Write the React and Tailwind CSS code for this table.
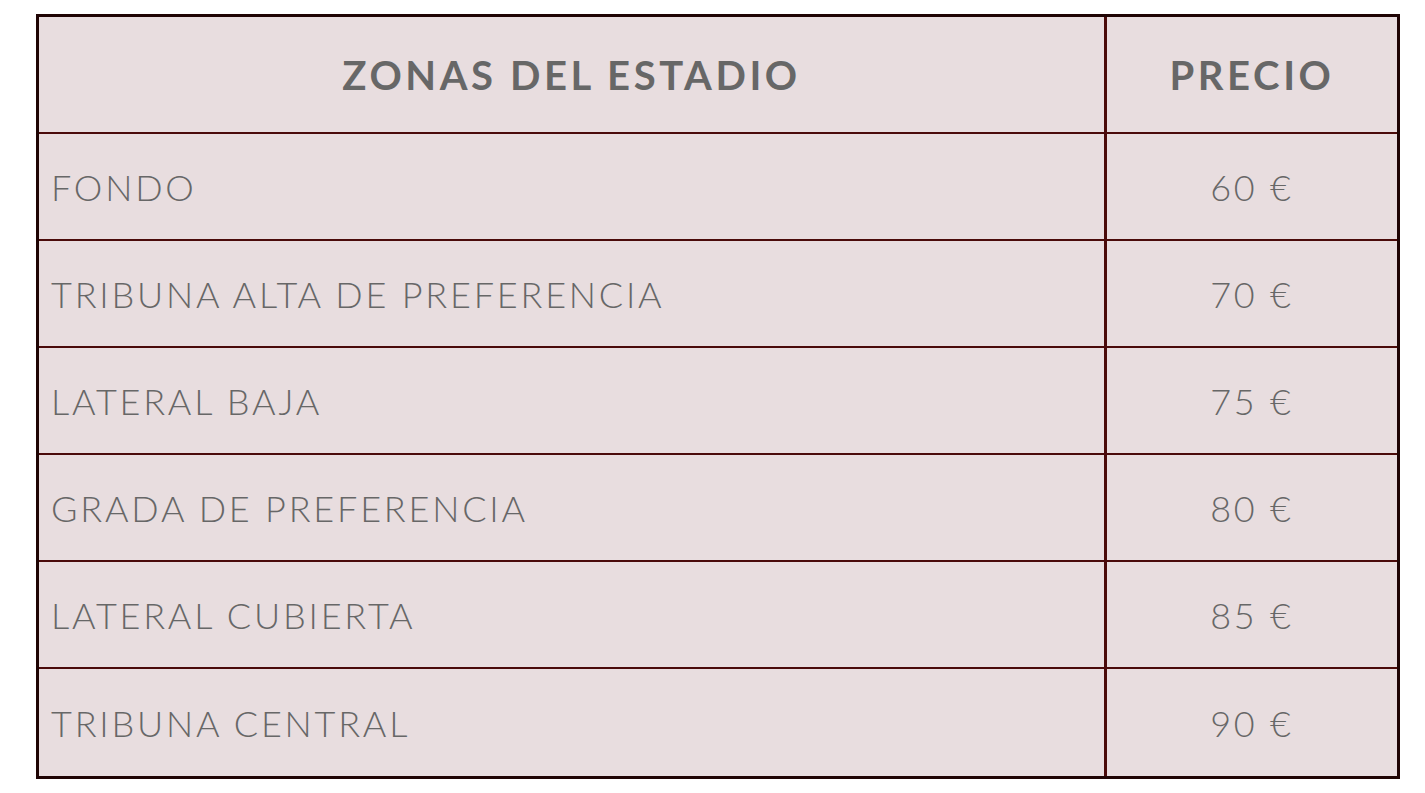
import React from 'react';

const ZONES = [
  { name: 'FONDO', price: '60 €' },
  { name: 'TRIBUNA ALTA DE PREFERENCIA', price: '70 €' },
  { name: 'LATERAL BAJA', price: '75 €' },
  { name: 'GRADA DE PREFERENCIA', price: '80 €' },
  { name: 'LATERAL CUBIERTA', price: '85 €' },
  { name: 'TRIBUNA CENTRAL', price: '90 €' },
];

export default function App() {
  return (
    <div className="min-h-screen bg-white pt-[14px] pl-[36px]" style={{ fontFamily: 'Lato, "Open Sans", sans-serif' }}>
      <div className="w-[1364px] border-[3px] border-[#1f0404] bg-[#e8dddf] text-[#676767]">
        <div className="grid grid-cols-[1068px_1fr] h-[117px] border-b-[2px] border-[#4a0a0a]">
          <div className="flex items-center justify-center border-r-[3px] border-[#4a0a0a] text-[40px] font-bold tracking-[3.6px]">
            ZONAS DEL ESTADIO
          </div>
          <div className="flex items-center justify-center text-[40px] font-bold tracking-[3.6px]">PRECIO</div>
        </div>
        {ZONES.map((zone, index) => (
          <div
            key={zone.name}
            className={`grid grid-cols-[1068px_1fr] h-[107px] ${index < ZONES.length - 1 ? 'border-b-[2px] border-[#4a0a0a]' : ''}`}
          >
            <div className="flex items-center pl-[12px] border-r-[3px] border-[#4a0a0a] text-[36px] font-light tracking-[2.8px]">
              {zone.name}
            </div>
            <div className="flex items-center justify-center text-[36px] font-light tracking-[2.8px]">{zone.price}</div>
          </div>
        ))}
      </div>
    </div>
  );
}
